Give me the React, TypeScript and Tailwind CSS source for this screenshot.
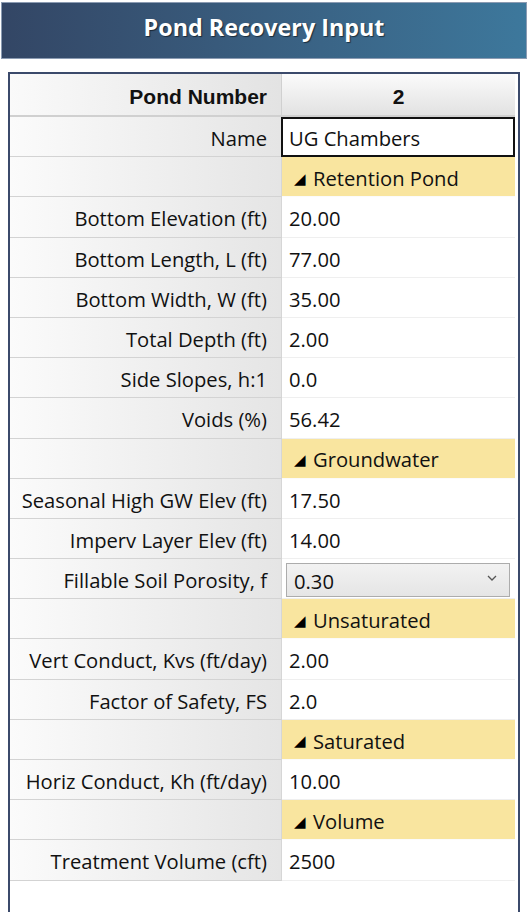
import React from "react";

type Row =
  | { kind: "value"; label: string; value: string }
  | { kind: "section"; title: string }
  | { kind: "name"; label: string; value: string }
  | { kind: "select"; label: string; value: string };

const rows: Row[] = [
  { kind: "name", label: "Name", value: "UG Chambers" },
  { kind: "section", title: "Retention Pond" },
  { kind: "value", label: "Bottom Elevation (ft)", value: "20.00" },
  { kind: "value", label: "Bottom Length, L (ft)", value: "77.00" },
  { kind: "value", label: "Bottom Width, W (ft)", value: "35.00" },
  { kind: "value", label: "Total Depth (ft)", value: "2.00" },
  { kind: "value", label: "Side Slopes, h:1", value: "0.0" },
  { kind: "value", label: "Voids (%)", value: "56.42" },
  { kind: "section", title: "Groundwater" },
  { kind: "value", label: "Seasonal High GW Elev (ft)", value: "17.50" },
  { kind: "value", label: "Imperv Layer Elev (ft)", value: "14.00" },
  { kind: "select", label: "Fillable Soil Porosity, f", value: "0.30" },
  { kind: "section", title: "Unsaturated" },
  { kind: "value", label: "Vert Conduct, Kvs (ft/day)", value: "2.00" },
  { kind: "value", label: "Factor of Safety, FS", value: "2.0" },
  { kind: "section", title: "Saturated" },
  { kind: "value", label: "Horiz Conduct, Kh (ft/day)", value: "10.00" },
  { kind: "section", title: "Volume" },
  { kind: "value", label: "Treatment Volume (cft)", value: "2500" },
];

const font = "font-['Open_Sans','Noto_Sans',sans-serif]";

function LabelCell({ text }: { text: string }) {
  return (
    <div className="w-[272px] shrink-0 h-full flex items-center justify-end pr-[14px] pt-[3px] bg-gradient-to-r from-[#fbfbfb] to-[#e5e5e5] border-b border-[#d3d3d3] border-r border-r-[#d6d6d6]">
      <span className="text-[20.2px] text-[#111] leading-none whitespace-nowrap">{text}</span>
    </div>
  );
}

export default function App() {
  return (
    <div className={`w-[527px] h-[912px] overflow-hidden bg-white ${font}`}>
      <div className="ml-[1px] mt-[2px] h-[57px] bg-gradient-to-r from-[#334665] to-[#3d789c] border border-[#8b9bb2] flex items-center justify-center">
        <span className="text-white font-bold text-[23.3px] leading-none [text-shadow:1px_1px_1px_rgba(0,0,0,0.55)] -mt-[5px]">
          Pond Recovery Input
        </span>
      </div>

      <div className="mt-[13px] ml-[8px] w-[512px] h-[900px] border-2 border-b-0 border-[#3b4a6b] pr-[3px]">
        <div className="flex h-[43px]">
          <div className="w-[272px] shrink-0 h-full flex items-center justify-end pr-[14px] pt-[3px] bg-gradient-to-r from-[#fafafa] to-[#e3e3e3] border-b-2 border-[#d0d0d0] border-r border-r-[#d0d0d0]">
            <span className="font-['Liberation_Sans',Arial,sans-serif] font-bold text-[21px] text-[#111] leading-none">
              Pond Number
            </span>
          </div>
          <div className="flex-1 h-full flex items-center justify-center pt-[3px] bg-gradient-to-b from-[#fbfbfb] to-[#e2e2e2] border-b-2 border-[#d0d0d0]">
            <span className="font-['Liberation_Sans',Arial,sans-serif] font-bold text-[21px] text-[#111] leading-none">
              2
            </span>
          </div>
        </div>

        {rows.map((r, i) => (
          <div key={i} className="flex h-[40.2px]">
            <LabelCell text={r.kind === "section" ? "" : r.label} />
            {r.kind === "value" && (
              <div className="flex-1 h-full flex items-center pl-[7px] pt-[3px] bg-white border-b border-[#efefef]">
                <span className="text-[20.2px] text-[#111] leading-none">{r.value}</span>
              </div>
            )}
            {r.kind === "name" && (
              <div className="flex-1 h-full flex items-center pl-[6px] pt-[3px] bg-white border-2 border-[#111] -ml-[1px]">
                <span className="text-[20.2px] text-[#111] leading-none">{r.value}</span>
              </div>
            )}
            {r.kind === "section" && (
              <div className="flex-1 h-full flex items-center pl-[12px] pt-[3px] bg-[#f9e59f] border-b border-[#fbfbfb]">
                <span className="text-[15px] text-black leading-none mr-[7px]">◢</span>
                <span className="text-[20.2px] text-[#111] leading-none">{r.title}</span>
              </div>
            )}
            {r.kind === "select" && (
              <div className="flex-1 h-full flex items-center pl-[4px] pr-[5px] bg-white border-b border-[#efefef]">
                <div className="w-full h-[34px] mt-[2px] flex items-center justify-between pl-[7px] pt-[3px] pr-[12px] border border-[#acacac] bg-gradient-to-b from-[#f2f2f2] to-[#e5e5e5]">
                  <span className="text-[20.2px] text-[#111] leading-none">{r.value}</span>
                  <svg width="10" height="6" viewBox="0 0 10 6" className="mb-[6px]">
                    <path d="M1 1 L5 5 L9 1" fill="none" stroke="#555" strokeWidth="1.3" />
                  </svg>
                </div>
              </div>
            )}
          </div>
        ))}
      </div>
    </div>
  );
}
